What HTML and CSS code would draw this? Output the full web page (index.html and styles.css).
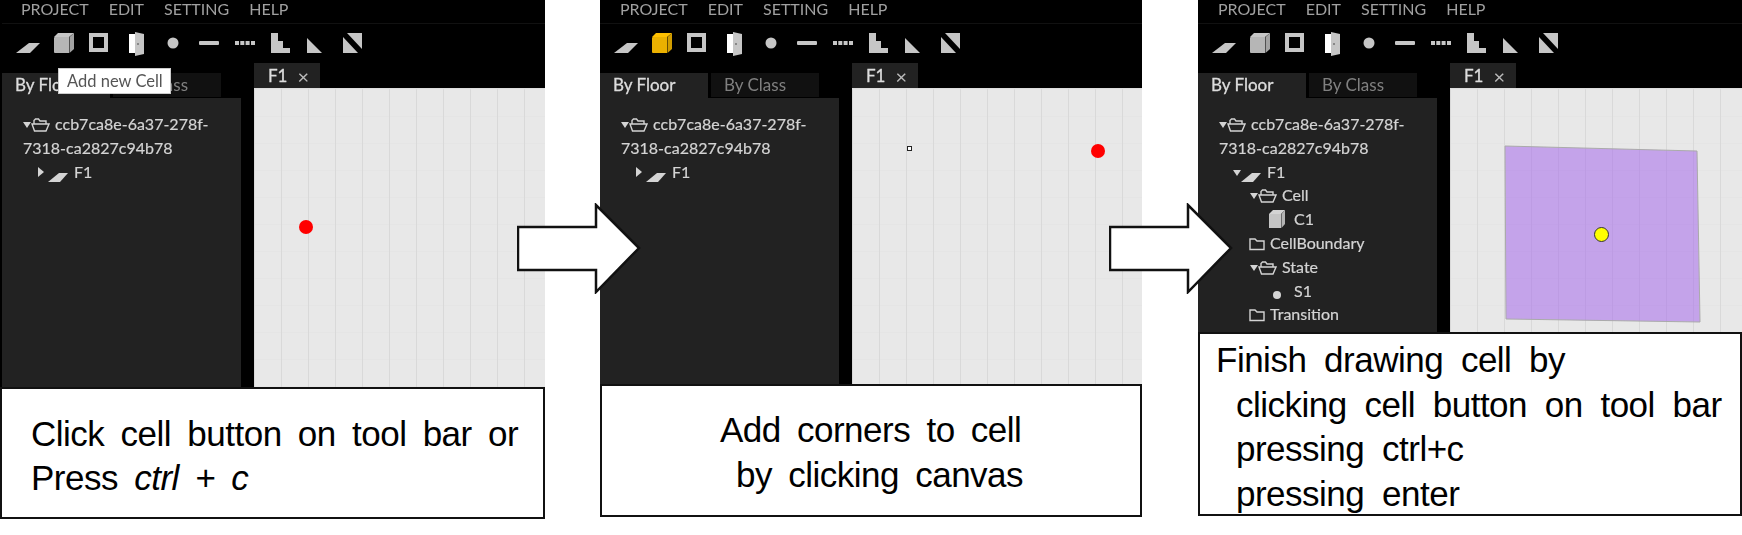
FILE: index.html
```html
<!DOCTYPE html>
<html lang="en">
<head>
  <meta charset="UTF-8" />
  <title>Drawing a cell</title>
  <link rel="stylesheet" href="styles.css">
</head>
<body>
  <svg class="sprites" width="0" height="0">
    <symbol id="i-plane" viewBox="0 0 36 28"><polygon points="6,24 19,14 30,14 20,24"/></symbol>
    <symbol id="i-cube" viewBox="0 0 36 28">
      <path d="M9 8h14v16H9q-1 0-1-1V9q0-1 1-1z" opacity=".92"/>
      <polygon points="8,8 12,4 28,4 23,8"/>
      <polygon points="23.500,8 28,4 28,20 23.500,24" opacity=".82"/>
    </symbol>
    <symbol id="i-box" viewBox="0 0 36 28"><rect x="9" y="6" width="15" height="15" fill="none" stroke="currentColor" stroke-width="4"/></symbol>
    <symbol id="i-door" viewBox="0 0 36 28">
      <rect x="11" y="5" width="6" height="19" fill="#fff"/>
      <polygon points="17,3 26,5 26,25 17,27"/>
      <rect x="19" y="14" width="2" height="2" fill="#888"/>
    </symbol>
    <symbol id="i-dot" viewBox="0 0 36 28"><circle cx="19" cy="14" r="5.5"/></symbol>
    <symbol id="i-line" viewBox="0 0 36 28"><rect x="9" y="12" width="20" height="4" rx="1"/></symbol>
    <symbol id="i-dashes" viewBox="0 0 36 28">
      <rect x="9" y="12" width="4" height="4"/><rect x="14.3" y="12" width="4" height="4"/>
      <rect x="19.6" y="12" width="4" height="4"/><rect x="25" y="12" width="4" height="4"/>
    </symbol>
    <symbol id="i-stair" viewBox="0 0 36 28"><polygon points="9,4 16,4 16,12 21,12 21,19 28,19 28,24 9,24"/></symbol>
    <symbol id="i-slope" viewBox="0 0 36 28"><polygon points="9,9 24,24 9,24"/></symbol>
    <symbol id="i-split" viewBox="0 0 36 28">
      <polygon points="13,4 28,4 28,20"/><polygon points="9,8 9,24 24,24"/>
    </symbol>

    <symbol id="t-down" viewBox="0 0 8 8"><polygon points="0,1 8,1 4,7"/></symbol>
    <symbol id="t-right" viewBox="0 0 8 10"><polygon points="1,0 7,5 1,10"/></symbol>
    <symbol id="t-open" viewBox="0 0 19 14">
      <path d="M3 6V2.500L4.500 1h3L9 3h6v3M1 6h17l-3 7H3.500z" fill="none" stroke="currentColor" stroke-width="1.4"/>
    </symbol>
    <symbol id="t-closed" viewBox="0 0 16 14">
      <path d="M1 12.500V2h5l2 2h7v8.500z" fill="none" stroke="currentColor" stroke-width="1.4"/>
    </symbol>
    <symbol id="t-plane" viewBox="0 0 20 10"><polygon points="0,10 11,1 20,1 12,10"/></symbol>
    <symbol id="t-cube" viewBox="0 0 17 18">
      <path d="M1 4h12v14H1z" opacity=".92"/><polygon points="1,4 5,0 17,0 13,4"/><polygon points="13.500,4 17,0 17,14 13.500,18" opacity=".82"/>
    </symbol>
    <symbol id="t-dot" viewBox="0 0 17 10"><circle cx="9" cy="5" r="4"/></symbol>
  </svg>

  <main class="figure">

    <section class="step step-one">
      <div class="app">
        <nav class="menu"><span>PROJECT</span><span>EDIT</span><span>SETTING</span><span>HELP</span></nav>
        <div class="toolbar">
          <svg><use href="#i-plane"/></svg>
          <svg><use href="#i-cube"/></svg>
          <svg><use href="#i-box"/></svg>
          <svg><use href="#i-door"/></svg>
          <svg><use href="#i-dot"/></svg>
          <svg><use href="#i-line"/></svg>
          <svg><use href="#i-dashes"/></svg>
          <svg><use href="#i-stair"/></svg>
          <svg><use href="#i-slope"/></svg>
          <svg><use href="#i-split"/></svg>
        </div>
        <div class="workspace">
          <aside class="sidebar">
            <div class="tabs">
              <span class="tab active">By Floor</span>
              <span class="tab">By Class</span>
            </div>
            <ul class="tree">
              <li class="level-0"><svg class="caret" width="8" height="8"><use href="#t-down"/></svg><svg class="folder" width="19" height="14"><use href="#t-open"/></svg>ccb7ca8e-6a37-278f-7318-ca2827c94b78</li>
              <li class="level-1"><svg class="caret-side" width="8" height="10"><use href="#t-right"/></svg><svg class="plane" width="20" height="10"><use href="#t-plane"/></svg>F1</li>
            </ul>
          </aside>
          <div class="editor">
            <div class="doc-tab"><b>F1</b><span>×</span></div>
            <div class="canvas">
              <i class="point red red-one"></i>
            </div>
          </div>
        </div>
        <div class="tooltip">Add new Cell</div>
      </div>
      <div class="caption">
        <span class="line">Click cell button on tool bar or</span>
        <span class="line">Press <em>ctrl + c</em></span>
      </div>
    </section>

    <section class="step step-two">
      <div class="app">
        <nav class="menu"><span>PROJECT</span><span>EDIT</span><span>SETTING</span><span>HELP</span></nav>
        <div class="toolbar">
          <svg><use href="#i-plane"/></svg>
          <svg class="on"><use href="#i-cube"/></svg>
          <svg><use href="#i-box"/></svg>
          <svg><use href="#i-door"/></svg>
          <svg><use href="#i-dot"/></svg>
          <svg><use href="#i-line"/></svg>
          <svg><use href="#i-dashes"/></svg>
          <svg><use href="#i-stair"/></svg>
          <svg><use href="#i-slope"/></svg>
          <svg><use href="#i-split"/></svg>
        </div>
        <div class="workspace">
          <aside class="sidebar">
            <div class="tabs">
              <span class="tab active">By Floor</span>
              <span class="tab">By Class</span>
            </div>
            <ul class="tree">
              <li class="level-0"><svg class="caret" width="8" height="8"><use href="#t-down"/></svg><svg class="folder" width="19" height="14"><use href="#t-open"/></svg>ccb7ca8e-6a37-278f-7318-ca2827c94b78</li>
              <li class="level-1"><svg class="caret-side" width="8" height="10"><use href="#t-right"/></svg><svg class="plane" width="20" height="10"><use href="#t-plane"/></svg>F1</li>
            </ul>
          </aside>
          <div class="editor">
            <div class="doc-tab"><b>F1</b><span>×</span></div>
            <div class="canvas">
              <i class="corner"></i>
              <i class="point red red-two"></i>
            </div>
          </div>
        </div>
      </div>
      <div class="caption">
        <span class="line line-add">Add corners to cell</span>
        <span class="line line-by">by clicking canvas</span>
      </div>
    </section>

    <section class="step step-three">
      <div class="app">
        <nav class="menu"><span>PROJECT</span><span>EDIT</span><span>SETTING</span><span>HELP</span></nav>
        <div class="toolbar">
          <svg><use href="#i-plane"/></svg>
          <svg><use href="#i-cube"/></svg>
          <svg><use href="#i-box"/></svg>
          <svg><use href="#i-door"/></svg>
          <svg><use href="#i-dot"/></svg>
          <svg><use href="#i-line"/></svg>
          <svg><use href="#i-dashes"/></svg>
          <svg><use href="#i-stair"/></svg>
          <svg><use href="#i-slope"/></svg>
          <svg><use href="#i-split"/></svg>
        </div>
        <div class="workspace">
          <aside class="sidebar">
            <div class="tabs">
              <span class="tab active">By Floor</span>
              <span class="tab">By Class</span>
            </div>
            <ul class="tree">
              <li class="level-0"><svg class="caret" width="8" height="8"><use href="#t-down"/></svg><svg class="folder" width="19" height="14"><use href="#t-open"/></svg>ccb7ca8e-6a37-278f-7318-ca2827c94b78</li>
              <li class="level-1"><svg class="caret" width="8" height="8"><use href="#t-down"/></svg><svg class="plane" width="20" height="10"><use href="#t-plane"/></svg>F1</li>
              <li class="level-2"><svg class="caret" width="8" height="8"><use href="#t-down"/></svg><svg class="folder" width="19" height="14"><use href="#t-open"/></svg>Cell</li>
              <li class="level-3"><svg class="leaf" width="17" height="18"><use href="#t-cube"/></svg>C1</li>
              <li class="level-2b"><svg class="folder" width="16" height="14"><use href="#t-closed"/></svg>CellBoundary</li>
              <li class="level-2"><svg class="caret" width="8" height="8"><use href="#t-down"/></svg><svg class="folder" width="19" height="14"><use href="#t-open"/></svg>State</li>
              <li class="level-3"><svg class="leaf" width="17" height="10"><use href="#t-dot"/></svg>S1</li>
              <li class="level-2b"><svg class="folder" width="16" height="14"><use href="#t-closed"/></svg>Transition</li>
            </ul>
          </aside>
          <div class="editor">
            <div class="doc-tab"><b>F1</b><span>×</span></div>
            <div class="canvas">
              <svg class="cell-shape" width="291" height="244"><polygon points="55,57 247,62 250,233 56,230"/></svg>
              <i class="point yellow"></i>
            </div>
          </div>
        </div>
      </div>
      <div class="caption caption-list">
        <span class="line">Finish drawing cell by</span>
        <span class="line sub">clicking cell button on tool bar</span>
        <span class="line sub">pressing ctrl+c</span>
        <span class="line sub">pressing enter</span>
      </div>
    </section>

    <svg class="arrow arrow-one" width="124" height="91"><polygon points="1,24 79,24 79,2 122,45 79,89 79,67 1,67"/></svg>
    <svg class="arrow arrow-two" width="124" height="91"><polygon points="1,24 79,24 79,2 122,45 79,89 79,67 1,67"/></svg>
  </main>
</body>
</html>
```

FILE: styles.css
```css
* {
  box-sizing: border-box;
}

html, body {
  margin: 0;
  padding: 0;
  background: #fff;
  overflow: hidden;
}

.sprites {
  position: absolute;
}

.figure {
  position: relative;
  display: flex;
  width: 1742px;
  height: 535px;
}

.step {
  flex: none;
}

.step-one {
  width: 545px;
  margin-right: 55px;
}

.step-two {
  width: 542px;
  margin-right: 56px;
}

.step-three {
  width: 544px;
}

/* app window */
.app {
  position: relative;
  overflow: hidden;
  background: #000;
  font-family: "Lato", sans-serif;
  filter: blur(0.4px);
}

.step-one .app {
  height: 387px;
  padding-left: 2px;
}

.step-two .app {
  height: 384px;
}

.step-three .app {
  height: 332px;
}

.menu {
  display: flex;
  gap: 20px;
  height: 24px;
  padding-left: 20px;
  font-size: 16px;
  line-height: 17px;
  color: #a0a0a0;
  border-bottom: 1px solid #111;
}

.step-one .menu {
  padding-left: 19px;
}

.toolbar {
  display: flex;
  height: 39px;
  padding: 5px 0 0 8px;
  color: #c6c6c6;
}

.toolbar svg {
  width: 36px;
  height: 28px;
  fill: currentColor;
}

.toolbar svg.on {
  color: #ffc000;
}

.workspace {
  display: flex;
  gap: 13px;
}

.sidebar {
  flex: none;
  width: 239px;
  padding-top: 10px;
}

.tabs {
  display: flex;
  gap: 3px;
  height: 25px;
}

.tab {
  width: 108px;
  height: 24px;
  padding-left: 13px;
  font-size: 17px;
  line-height: 24px;
  color: #808080;
  background: #111;
}

.tab.active {
  height: 25px;
  color: #ddd;
  background: #222;
  -webkit-text-stroke: 0.3px #ddd;
}

.tree {
  margin: 0;
  padding: 14px 0 400px;
  list-style: none;
  font-size: 16px;
  line-height: 23.8px;
  color: #d4d4d4;
  -webkit-text-stroke: 0.2px #d4d4d4;
  background: #222;
}

.tree svg {
  fill: currentColor;
}

.level-0 {
  padding: 0 20px 0 21px;
}

.level-1 {
  padding-left: 35px;
}

.level-2 {
  padding-left: 52px;
}

.level-2b {
  padding-left: 51px;
}

.level-3 {
  padding-left: 70px;
}

.caret {
  vertical-align: 1px;
}

.caret-side {
  margin-right: 3px;
  vertical-align: 1px;
}

.folder {
  margin-right: 5px;
  vertical-align: -2px;
}

.plane {
  margin-right: 6px;
  vertical-align: -4px;
}

.leaf {
  margin-right: 9px;
  vertical-align: -3px;
}

.editor {
  flex: 1;
  min-width: 0;
}

.doc-tab {
  display: flex;
  align-items: center;
  gap: 10px;
  width: 66px;
  height: 25px;
  padding-left: 14px;
  font-size: 17px;
  color: #ddd;
  background: #222;
}

.doc-tab b {
  font-weight: 400;
  -webkit-text-stroke: 0.3px #ddd;
}

.doc-tab span {
  font-size: 20px;
  line-height: 1;
  color: #bbb;
}

.canvas {
  position: relative;
  height: 300px;
  background-color: #e8e8e8;
  background-image:
    linear-gradient(to right, #d9d9d9 1px, transparent 1px),
    linear-gradient(to bottom, #e5e5e5 1px, transparent 1px);
  background-size: 27px 27px;
  background-position: 27px 0;
  border-top: 1px solid #ddd;
}

.point {
  position: absolute;
  border-radius: 50%;
}

.red {
  width: 14px;
  height: 14px;
  background: #f00;
}

.red-one {
  left: 45px;
  top: 131px;
}

.red-two {
  left: 239px;
  top: 55px;
}

.corner {
  position: absolute;
  left: 55px;
  top: 57px;
  width: 5px;
  height: 5px;
  background: #fff;
  border: 1px solid #222;
}

.cell-shape {
  position: absolute;
  left: 0;
  top: 0;
}

.cell-shape polygon {
  fill: rgba(165, 105, 235, 0.55);
  stroke: #aaa;
  stroke-width: 1;
}

.yellow {
  left: 144px;
  top: 138px;
  width: 15px;
  height: 15px;
  background: #ff0;
  border: 1.5px solid #333;
}

.tooltip {
  position: absolute;
  left: 58px;
  top: 68px;
  width: 113px;
  height: 26px;
  padding-left: 8px;
  font-size: 16.500px;
  line-height: 24px;
  color: #555;
  background: #fff;
  border: 1px solid #ccc;
}

/* captions */
.caption {
  border: 2px solid #111;
  background: #fff;
  font-family: "Liberation Sans", Arial, sans-serif;
  font-size: 35px;
  letter-spacing: -0.5px;
  word-spacing: 7px;
  color: #000;
}

.line {
  display: block;
}

.step-one .caption {
  height: 132px;
  padding: 23px 0 0 29px;
  line-height: 44px;
}

.step-two .caption {
  height: 133px;
  padding: 21px 0 0 118px;
  line-height: 45px;
}

.line-by {
  padding-left: 16px;
}

.caption-list {
  height: 184px;
  padding: 4px 0 0 16px;
  line-height: 44.700px;
  word-spacing: 8.500px;
}

.sub {
  padding-left: 20px;
}

/* arrows between the steps */
.arrow {
  position: absolute;
  top: 203px;
}

.arrow polygon {
  fill: #fff;
  stroke: #111;
  stroke-width: 2.5;
}

.arrow-one {
  left: 517px;
}

.arrow-two {
  left: 1109px;
}
```
